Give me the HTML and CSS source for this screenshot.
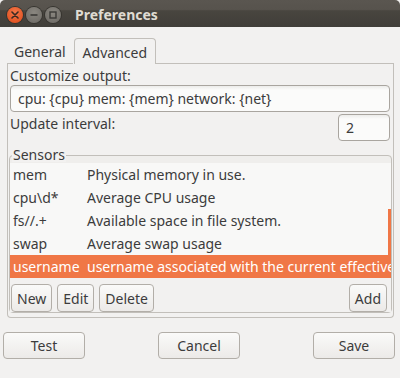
FILE: index.html
```html
<!DOCTYPE html>
<html lang="en">
<head>
    <meta charset="UTF-8">
    <title>Preferences</title>
    <link rel="stylesheet" href="styles.css">
</head>
<body>
    <div class="window">
        <div class="titlebar">
            <div class="wm-buttons">
                <span class="wm-btn close">
                    <svg width="8" height="8" viewBox="0 0 8 8"><path d="M1 1L7 7M7 1L1 7" stroke="#3a2a22" stroke-width="1.6" stroke-linecap="round"/></svg>
                </span>
                <span class="wm-btn">
                    <svg width="8" height="8" viewBox="0 0 8 8"><path d="M0.5 4H7.5" stroke="#3b3a37" stroke-width="1.6"/></svg>
                </span>
                <span class="wm-btn">
                    <svg width="8" height="8" viewBox="0 0 8 8"><rect x="1" y="1" width="6" height="6" fill="none" stroke="#3b3a37" stroke-width="1.4"/></svg>
                </span>
            </div>
            <div class="title">Preferences</div>
        </div>

        <div class="content">
            <div class="notebook">
                <div class="tabs">
                    <div class="tab">General</div>
                    <div class="tab active">Advanced</div>
                    <div class="tab-fill"></div>
                </div>
                <div class="panel">
                    <div class="label">Customize output:</div>
                    <div class="entry">cpu: {cpu} mem: {mem} network: {net}</div>
                    <div class="interval-row">
                        <div class="label">Update interval:</div>
                        <div class="entry spin">2</div>
                    </div>
                    <fieldset class="sensors">
                        <legend>Sensors</legend>
                        <div class="list">
                            <div class="row"><span class="name">mem</span><span class="desc">Physical memory in use.</span></div>
                            <div class="row"><span class="name">cpu\d*</span><span class="desc">Average CPU usage</span></div>
                            <div class="row"><span class="name">fs//.+</span><span class="desc">Available space in file system.</span></div>
                            <div class="row"><span class="name">swap</span><span class="desc">Average swap usage</span></div>
                            <div class="row selected"><span class="name">username</span><span class="desc">username associated with the current effective user</span></div>
                            <div class="scrollbar"></div>
                        </div>
                        <div class="list-buttons">
                            <button class="btn">New</button>
                            <button class="btn">Edit</button>
                            <button class="btn">Delete</button>
                            <span class="spacer"></span>
                            <button class="btn">Add</button>
                        </div>
                    </fieldset>
                </div>
            </div>

            <div class="actions">
                <button class="btn wide">Test</button>
                <button class="btn wide">Cancel</button>
                <button class="btn wide">Save</button>
            </div>
        </div>
    </div>
</body>
</html>
```

FILE: styles.css
```css
body {
    margin: 0;
    background: #f2f1f0;
    font-family: 'Noto Sans', sans-serif;
    font-size: 14px;
    color: #3c3c3c;
}
.window {
    width: 400px;
    height: 378px;
    background: #f2f1f0;
    overflow: hidden;
}
.titlebar {
    height: 27px;
    display: flex;
    align-items: center;
    background: linear-gradient(#5a5650 0%, #57534d 35%, #48453f 40%, #403e39 100%);
    border-radius: 5px 5px 0 0;
}
.wm-buttons {
    display: flex;
    gap: 3px;
    padding: 2px 0 0 7px;
}
.wm-btn {
    width: 16px;
    height: 16px;
    border-radius: 50%;
    display: flex;
    align-items: center;
    justify-content: center;
    background: radial-gradient(circle at 50% 35%, #8a8780, #6a6762);
    box-shadow: 0 0 0 1px #36342f;
}
.wm-btn.close {
    background: radial-gradient(circle at 50% 35%, #f4784a, #dd4816);
}
.title {
    margin-left: 14px;
    padding-top: 2px;
    font-weight: bold;
    font-size: 14px;
    color: #dfdbd2;
}
.content {
    padding: 0 5px 0 3px;
}
.notebook {
    padding: 11px 1px 0 4px;
}
.tabs {
    display: flex;
    align-items: flex-end;
    height: 26px;
}
.tab {
    padding: 0 7px 0 7px;
    height: 25px;
    line-height: 27px;
    border-bottom: 1px solid #c2bfba;
}
.tab.active {
    padding: 0 8px;
    height: 25px;
    border: 1px solid #c2bfba;
    border-bottom: none;
    border-radius: 4px 4px 0 0;
    background: #f2f1f0;
    margin-left: 1px;
}
.tab-fill {
    flex: 1;
    height: 25px;
    border-bottom: 1px solid #c2bfba;
}
.panel {
    border: 1px solid #c2bfba;
    border-top: none;
    border-radius: 0 0 4px 4px;
    padding: 2px 1px 4px 1px;
}
.label {
    line-height: 19px;
    margin-left: 1px;
}
.entry {
    height: 25px;
    line-height: 25px;
    margin: 0 2px 0 1px;
    padding: 0 7px;
    border: 1px solid #a9a59f;
    border-radius: 4px;
    background: linear-gradient(#ececea 0px, #fbfbfa 4px, #fbfbfa 100%);
    color: #3c3c3c;
}
.interval-row {
    display: flex;
    justify-content: space-between;
    align-items: flex-start;
    margin-top: 2px;
}
.spin {
    width: 36px;
}
.sensors {
    min-width: 0;
    margin: 7px 0 0 0;
    padding: 1px 0 0 0;
    border: 1px solid #c2bfba;
    border-radius: 4px;
    background: #efeeec;
}
.sensors legend {
    padding: 0 1px;
    margin-left: 2px;
    line-height: 14px;
    background: #f2f1f0;
}
.list {
    position: relative;
    background: #f8f8f7;
}
.row {
    display: flex;
    height: 23px;
    line-height: 23px;
    white-space: nowrap;
    overflow: hidden;
    padding-left: 3px;
}
.row .name {
    width: 74px;
    flex: none;
}
.row.selected {
    background: #f07746;
    color: #ffffff;
}
.scrollbar {
    position: absolute;
    right: 0;
    top: 46px;
    width: 3px;
    height: 46px;
    background: #f07746;
}
.list-buttons {
    display: flex;
    gap: 5px;
    padding: 6px 4px 0 1px;
    background: #f2f1f0;
}
.spacer {
    flex: 1;
}
.btn {
    font-family: inherit;
    font-size: 14px;
    color: #3c3c3c;
    height: 28px;
    padding: 0 5px;
    border: 1px solid #b2aea8;
    border-radius: 4px;
    background: linear-gradient(#fafaf9, #eceae8);
}
.actions {
    display: flex;
    justify-content: space-between;
    margin-top: 14px;
}
.btn.wide {
    width: 82px;
    height: 27px;
}
```
